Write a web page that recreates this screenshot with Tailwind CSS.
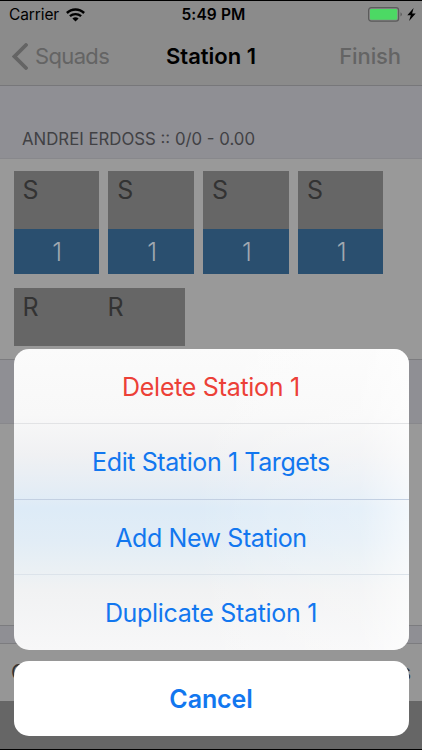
<!DOCTYPE html>
<html lang="en">
<head>
<meta charset="utf-8">
<title>Station 1</title>
<script src="https://cdn.jsdelivr.net/npm/@tailwindcss/browser@4"></script>
</head>
<body class="relative w-[422px] h-[750px] overflow-hidden bg-[#999] font-['Inter',sans-serif] whitespace-nowrap">
<div class="flex flex-col h-[750px] border-t border-b border-black">
  <header class="h-[85px] shrink-0 bg-[#8b8b8b] border-b border-[#77777a]">
    <div class="grid grid-cols-3 items-center h-[28px] pl-[9px] pr-[6px] text-black">
      <div class="flex items-center gap-[7px]">
        <span class="text-[15.5px] tracking-[-0.1px]">Carrier</span>
        <svg width="19" height="14" viewBox="0 0 19 14" fill="none" stroke="#000"><path d="M.9 5C5.7.3 13.3.3 18.1 5" stroke-width="2.5"/><path d="M3.9 8.2C7.1 5.3 11.9 5.3 15.1 8.2" stroke-width="2.3"/><path d="M6.4 10.6Q9.5 8 12.6 10.6L9.5 13.6Z" fill="#000" stroke="none"/></svg>
      </div>
      <span class="text-center text-[15.5px] font-semibold tracking-[0.15px] pl-[2px]">5:49 PM</span>
      <div class="flex items-center justify-end gap-[4px] pb-[1px]">
        <svg width="35" height="15" viewBox="0 0 35 15"><rect x=".6" y=".6" width="30" height="13.6" rx="2.6" fill="none" stroke="#5b5b5b" stroke-width="1.2"/><rect x="2" y="2" width="27.2" height="10.8" rx="1.2" fill="#4cd964"/><path d="M32.5 5.2Q35.3 7.4 32.5 9.6Z" fill="#5b5b5b"/></svg>
        <svg width="9" height="13" viewBox="0 0 9 13"><path d="M6.6 0L.3 7.3H3.8L2.1 13L8.7 5.4H5.1Z"/></svg>
      </div>
    </div>
    <div class="grid grid-cols-3 items-center h-[54px] pl-[12px] pr-[21px]">
      <div class="flex items-center gap-[7px] text-[#646464]">
        <svg width="16" height="27" viewBox="0 0 16 27" fill="none" stroke="currentColor" stroke-width="3.8" stroke-linecap="round"><path d="M14 2L2.5 13.5L14 25"/></svg>
        <span class="text-[22px] tracking-[-0.65px]">Squads</span>
      </div>
      <span class="text-center text-[22px] font-semibold pl-[9px] tracking-[-0.02px]">Station 1</span>
      <span class="text-right text-[22px] font-medium tracking-[-0.1px] text-[#646464]">Finish</span>
    </div>
  </header>
  <div class="h-[73px] shrink-0 bg-[#8f8f94] flex items-end pl-[22px] pb-[8px] border-b border-[#88888c]">
    <span class="text-[16.8px] leading-[22px] text-[#414144]">ANDREI ERDOSS :: 0/0 - 0.00</span>
  </div>
  <section class="h-[201px] shrink-0 bg-[#999] pt-[12px] pl-[13.5px] border-b border-[#7c7c7f]">
    <div class="flex gap-[9.3px] text-[25px]">
      <div class="w-[85.5px] h-[103px] bg-[#666]"><div class="h-[58px] pl-[9px] pt-[3px] leading-[32px] text-[#333]">S</div><div class="h-[45px] bg-[#2a4f6f] text-center leading-[46px] font-light text-[#a0a8b0] pl-[2px]">1</div></div>
      <div class="w-[85.5px] h-[103px] bg-[#666]"><div class="h-[58px] pl-[9px] pt-[3px] leading-[32px] text-[#333]">S</div><div class="h-[45px] bg-[#2a4f6f] text-center leading-[46px] font-light text-[#a0a8b0] pl-[2px]">1</div></div>
      <div class="w-[85.5px] h-[103px] bg-[#666]"><div class="h-[58px] pl-[9px] pt-[3px] leading-[32px] text-[#333]">S</div><div class="h-[45px] bg-[#2a4f6f] text-center leading-[46px] font-light text-[#a0a8b0] pl-[2px]">1</div></div>
      <div class="w-[85.5px] h-[103px] bg-[#666]"><div class="h-[58px] pl-[9px] pt-[3px] leading-[32px] text-[#333]">S</div><div class="h-[45px] bg-[#2a4f6f] text-center leading-[46px] font-light text-[#a0a8b0] pl-[2px]">1</div></div>
    </div>
    <div class="mt-[14px] w-[171px] h-[58px] bg-[#666] grid grid-cols-2 text-[25px] leading-[32px] text-[#333] pt-[3px] pl-[9px]"><span>R</span><span class="pl-[4px]">R</span></div>
  </section>
  <div class="h-[64px] shrink-0 bg-[#8f8f94] border-b border-[#88888c]"></div>
  <div class="h-[202px] shrink-0 bg-[#999] border-b border-[#7c7c7f]"></div>
  <div class="h-[18px] shrink-0 bg-[#8f8f94] border-b border-[#7c7c7f]"></div>
  <div class="h-[57px] shrink-0 bg-[#969696] flex justify-between pl-[11px] pr-[11px] pt-[13px] text-[21px] leading-[32px] text-[#333]"><span>C</span><span>s</span></div>
  <div class="grow bg-[#666]"></div>
</div>
<div class="absolute left-[13.5px] top-[348.5px] w-[395px] flex flex-col gap-[10.5px] text-center text-[25px] text-[#1277ef]">
  <div class="h-[301.5px] rounded-[15px] overflow-hidden bg-[linear-gradient(180deg,#fbfbfb_0%,#f8f8f8_22%,#f0f1f3_35%,#e5edf5_46%,#ddebf7_53%,#e2edf6_64%,#eaf0f4_73%,#f1f2f3_80%,#f7f7f8_100%)]">
    <div class="h-full flex flex-col bg-[linear-gradient(90deg,transparent_0%,transparent_45%,rgba(255,255,255,0.15)_65%,rgba(255,255,255,0.25)_88%,rgba(255,255,255,0.65)_100%)]">
      <div class="h-[75.5px] leading-[76px] border-b border-[#e2e3e5] text-[#ec4037] tracking-[-0.28px]">Delete Station 1</div>
      <div class="h-[75.5px] leading-[76px] border-b border-[#c3d0e2] tracking-[-0.4px]">Edit Station 1 Targets</div>
      <div class="h-[75.5px] leading-[76px] border-b border-[#dce3ea] tracking-[-0.42px]">Add New Station</div>
      <div class="h-[75px] leading-[76px] tracking-[-0.3px]">Duplicate Station 1</div>
    </div>
  </div>
  <div class="h-[75px] rounded-[15px] bg-white leading-[76px] font-semibold tracking-[-0.1px]">Cancel</div>
</div>
</body>
</html>
